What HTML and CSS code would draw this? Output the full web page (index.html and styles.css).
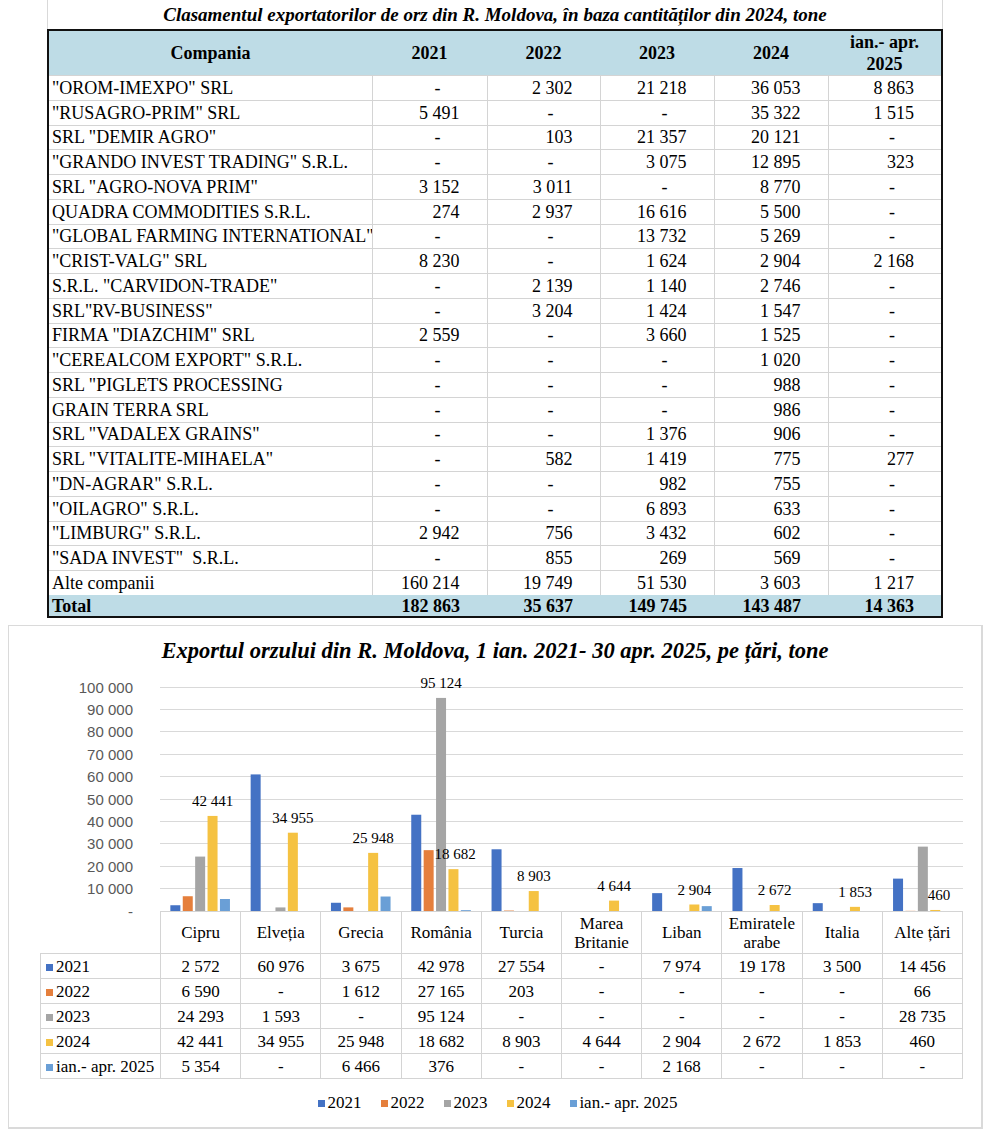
FILE: index.html
```html
<!DOCTYPE html>
<html lang="ro">
<head>
<meta charset="utf-8">
<title>Exportul orzului din R. Moldova</title>
<link rel="stylesheet" href="styles.css">
</head>
<body>
<section class="report">
  <div class="report-title">Clasamentul exportatorilor de orz din R. Moldova, în baza cantităților din 2024, tone</div>
  <div class="tbl-frame">
    <table class="rank">
      <colgroup>
        <col class="c-name"><col class="c-115"><col class="c-113"><col class="c-114"><col class="c-114"><col>
      </colgroup>
      <thead>
        <tr><th>Compania</th><th>2021</th><th>2022</th><th>2023</th><th>2024</th><th>ian.- apr.<br>2025</th></tr>
      </thead>
      <tbody>
        <tr><td class="name">"OROM-IMEXPO" SRL</td><td class="d">-</td><td>2 302</td><td>21 218</td><td>36 053</td><td>8 863</td></tr>
        <tr><td class="name">"RUSAGRO-PRIM" SRL</td><td>5 491</td><td class="d">-</td><td class="d">-</td><td>35 322</td><td>1 515</td></tr>
        <tr><td class="name">SRL "DEMIR AGRO"</td><td class="d">-</td><td>103</td><td>21 357</td><td>20 121</td><td class="d">-</td></tr>
        <tr><td class="name">"GRANDO INVEST TRADING" S.R.L.</td><td class="d">-</td><td class="d">-</td><td>3 075</td><td>12 895</td><td>323</td></tr>
        <tr><td class="name">SRL "AGRO-NOVA PRIM"</td><td>3 152</td><td>3 011</td><td class="d">-</td><td>8 770</td><td class="d">-</td></tr>
        <tr><td class="name">QUADRA COMMODITIES S.R.L.</td><td>274</td><td>2 937</td><td>16 616</td><td>5 500</td><td class="d">-</td></tr>
        <tr><td class="name">"GLOBAL FARMING INTERNATIONAL"</td><td class="d">-</td><td class="d">-</td><td>13 732</td><td>5 269</td><td class="d">-</td></tr>
        <tr><td class="name">"CRIST-VALG" SRL</td><td>8 230</td><td class="d">-</td><td>1 624</td><td>2 904</td><td>2 168</td></tr>
        <tr><td class="name">S.R.L. "CARVIDON-TRADE"</td><td class="d">-</td><td>2 139</td><td>1 140</td><td>2 746</td><td class="d">-</td></tr>
        <tr><td class="name">SRL"RV-BUSINESS"</td><td class="d">-</td><td>3 204</td><td>1 424</td><td>1 547</td><td class="d">-</td></tr>
        <tr><td class="name">FIRMA "DIAZCHIM" SRL</td><td>2 559</td><td class="d">-</td><td>3 660</td><td>1 525</td><td class="d">-</td></tr>
        <tr><td class="name">"CEREALCOM EXPORT" S.R.L.</td><td class="d">-</td><td class="d">-</td><td class="d">-</td><td>1 020</td><td class="d">-</td></tr>
        <tr><td class="name">SRL "PIGLETS PROCESSING</td><td class="d">-</td><td class="d">-</td><td class="d">-</td><td>988</td><td class="d">-</td></tr>
        <tr><td class="name">GRAIN TERRA SRL</td><td class="d">-</td><td class="d">-</td><td class="d">-</td><td>986</td><td class="d">-</td></tr>
        <tr><td class="name">SRL "VADALEX GRAINS"</td><td class="d">-</td><td class="d">-</td><td>1 376</td><td>906</td><td class="d">-</td></tr>
        <tr><td class="name">SRL "VITALITE-MIHAELA"</td><td class="d">-</td><td>582</td><td>1 419</td><td>775</td><td>277</td></tr>
        <tr><td class="name">"DN-AGRAR" S.R.L.</td><td class="d">-</td><td class="d">-</td><td>982</td><td>755</td><td class="d">-</td></tr>
        <tr><td class="name">"OILAGRO" S.R.L.</td><td class="d">-</td><td class="d">-</td><td>6 893</td><td>633</td><td class="d">-</td></tr>
        <tr><td class="name">"LIMBURG" S.R.L.</td><td>2 942</td><td>756</td><td>3 432</td><td>602</td><td class="d">-</td></tr>
        <tr><td class="name">"SADA INVEST"&nbsp; S.R.L.</td><td class="d">-</td><td>855</td><td>269</td><td>569</td><td class="d">-</td></tr>
        <tr><td class="name">Alte companii</td><td>160 214</td><td>19 749</td><td>51 530</td><td>3 603</td><td>1 217</td></tr>
      </tbody>
      <tfoot>
        <tr><td class="name">Total</td><td>182 863</td><td>35 637</td><td>149 745</td><td>143 487</td><td>14 363</td></tr>
      </tfoot>
    </table>
  </div>
</section>

<section class="chart">
  <div class="chart-title">Exportul orzului din R. Moldova, 1 ian. 2021- 30 apr. 2025, pe țări, tone</div>
  <svg class="plot" width="972" height="243" viewBox="0 0 972 243">
    <g class="grid">
      <line x1="151" x2="954" y1="220.5" y2="220.5"/>
      <line x1="151" x2="954" y1="198.5" y2="198.5"/>
      <line x1="151" x2="954" y1="175.5" y2="175.5"/>
      <line x1="151" x2="954" y1="153.5" y2="153.5"/>
      <line x1="151" x2="954" y1="131.5" y2="131.5"/>
      <line x1="151" x2="954" y1="108.5" y2="108.5"/>
      <line x1="151" x2="954" y1="86.5" y2="86.5"/>
      <line x1="151" x2="954" y1="63.5" y2="63.5"/>
      <line x1="151" x2="954" y1="41.5" y2="41.5"/>
      <line x1="151" x2="954" y1="19.5" y2="19.5"/>
    </g>
    <g class="ylab">
      <text x="124" y="249">-</text>
      <text x="124" y="226">10 000</text>
      <text x="124" y="203.5">20 000</text>
      <text x="124" y="181">30 000</text>
      <text x="124" y="159">40 000</text>
      <text x="124" y="136.5">50 000</text>
      <text x="124" y="114">60 000</text>
      <text x="124" y="91.5">70 000</text>
      <text x="124" y="69">80 000</text>
      <text x="124" y="47">90 000</text>
      <text x="124" y="24.5">100 000</text>
    </g>
    <g transform="translate(191.15 243) scale(1 -1)">
      <rect class="b1" x="-29.8" width="10" height="5.76"/>
      <rect class="b2" x="-17.4" width="10" height="14.76"/>
      <rect class="b3" x="-5" width="10" height="54.42"/>
      <rect class="b4" x="7.4" width="10" height="95.07"/>
      <rect class="b5" x="19.8" width="10" height="11.99"/>
    </g>
    <g transform="translate(271.45 243) scale(1 -1)">
      <rect class="b1" x="-29.8" width="10" height="136.59"/>
      <rect class="b3" x="-5" width="10" height="3.57"/>
      <rect class="b4" x="7.4" width="10" height="78.3"/>
    </g>
    <g transform="translate(351.75 243) scale(1 -1)">
      <rect class="b1" x="-29.8" width="10" height="8.23"/>
      <rect class="b2" x="-17.4" width="10" height="3.61"/>
      <rect class="b4" x="7.4" width="10" height="58.12"/>
      <rect class="b5" x="19.8" width="10" height="14.48"/>
    </g>
    <g transform="translate(432.05 243) scale(1 -1)">
      <rect class="b1" x="-29.8" width="10" height="96.27"/>
      <rect class="b2" x="-17.4" width="10" height="60.85"/>
      <rect class="b3" x="-5" width="10" height="213.08"/>
      <rect class="b4" x="7.4" width="10" height="41.85"/>
      <rect class="b5" x="19.8" width="10" height="0.84"/>
    </g>
    <g transform="translate(512.35 243) scale(1 -1)">
      <rect class="b1" x="-29.8" width="10" height="61.72"/>
      <rect class="b2" x="-17.4" width="10" height="0.45"/>
      <rect class="b4" x="7.4" width="10" height="19.94"/>
    </g>
    <g transform="translate(592.65 243) scale(1 -1)">
      <rect class="b4" x="7.4" width="10" height="10.4"/>
    </g>
    <g transform="translate(672.95 243) scale(1 -1)">
      <rect class="b1" x="-29.8" width="10" height="17.86"/>
      <rect class="b4" x="7.4" width="10" height="6.5"/>
      <rect class="b5" x="19.8" width="10" height="4.86"/>
    </g>
    <g transform="translate(753.25 243) scale(1 -1)">
      <rect class="b1" x="-29.8" width="10" height="42.96"/>
      <rect class="b4" x="7.4" width="10" height="5.99"/>
    </g>
    <g transform="translate(833.55 243) scale(1 -1)">
      <rect class="b1" x="-29.8" width="10" height="7.84"/>
      <rect class="b4" x="7.4" width="10" height="4.15"/>
    </g>
    <g transform="translate(913.85 243) scale(1 -1)">
      <rect class="b1" x="-29.8" width="10" height="32.38"/>
      <rect class="b2" x="-17.4" width="10" height="0.15"/>
      <rect class="b3" x="-5" width="10" height="64.37"/>
      <rect class="b4" x="7.4" width="10" height="1.03"/>
    </g>
    <g class="dlab">
      <text x="203.5" y="138">42 441</text>
      <text x="283.9" y="155">34 955</text>
      <text x="364.2" y="175">25 948</text>
      <text x="432" y="20">95 124</text>
      <text x="446" y="191">18 682</text>
      <text x="524.8" y="213">8 903</text>
      <text x="605" y="222.5">4 644</text>
      <text x="685.4" y="226.5">2 904</text>
      <text x="765.7" y="226.5">2 672</text>
      <text x="846" y="229">1 853</text>
      <text x="930" y="232">460</text>
    </g>
  </svg>
  <table class="cats">
    <colgroup><col class="c-key"><col><col><col><col><col><col><col><col><col><col></colgroup>
    <thead>
      <tr>
        <th class="corner"></th>
        <th>Cipru</th><th>Elveția</th><th>Grecia</th><th>România</th><th>Turcia</th>
        <th>Marea<br>Britanie</th><th>Liban</th><th>Emiratele<br>arabe</th><th>Italia</th><th>Alte țări</th>
      </tr>
    </thead>
    <tbody>
      <tr><td class="key"><span class="sw s1"></span>2021</td><td>2 572</td><td>60 976</td><td>3 675</td><td>42 978</td><td>27 554</td><td>-</td><td>7 974</td><td>19 178</td><td>3 500</td><td>14 456</td></tr>
      <tr><td class="key"><span class="sw s2"></span>2022</td><td>6 590</td><td>-</td><td>1 612</td><td>27 165</td><td>203</td><td>-</td><td>-</td><td>-</td><td>-</td><td>66</td></tr>
      <tr><td class="key"><span class="sw s3"></span>2023</td><td>24 293</td><td>1 593</td><td>-</td><td>95 124</td><td>-</td><td>-</td><td>-</td><td>-</td><td>-</td><td>28 735</td></tr>
      <tr><td class="key"><span class="sw s4"></span>2024</td><td>42 441</td><td>34 955</td><td>25 948</td><td>18 682</td><td>8 903</td><td>4 644</td><td>2 904</td><td>2 672</td><td>1 853</td><td>460</td></tr>
      <tr><td class="key"><span class="sw s5"></span>ian.- apr. 2025</td><td>5 354</td><td>-</td><td>6 466</td><td>376</td><td>-</td><td>-</td><td>2 168</td><td>-</td><td>-</td><td>-</td></tr>
    </tbody>
  </table>
  <div class="legend">
    <span class="item"><span class="sw s1"></span>2021</span>
    <span class="item"><span class="sw s2"></span>2022</span>
    <span class="item"><span class="sw s3"></span>2023</span>
    <span class="item"><span class="sw s4"></span>2024</span>
    <span class="item"><span class="sw s5"></span>ian.- apr. 2025</span>
  </div>
</section>
</body>
</html>
```

FILE: styles.css
```css
html, body {
  margin: 0;
  padding: 0;
  background: #ffffff;
}

body {
  font-family: "Liberation Serif", "Times New Roman", serif;
  color: #000;
}

/* ---------- ranking table ---------- */
.report {
  margin-left: 47px;
  width: 896px;
}

.report-title {
  box-sizing: border-box;
  height: 29px;
  padding-top: 4px;
  border-left: 1px solid #d9d9d9;
  border-right: 1px solid #d9d9d9;
  text-align: center;
  font-weight: bold;
  font-style: italic;
  font-size: 19px;
  line-height: 22px;
  white-space: nowrap;
}

.tbl-frame {
  border: 2px solid #111;
}

.rank {
  width: 100%;
  border-collapse: collapse;
  table-layout: fixed;
  font-size: 18px;
  line-height: 20px;
}

.rank .c-name { width: 323px; }
.rank .c-115 { width: 115px; }
.rank .c-113 { width: 113px; }
.rank .c-114 { width: 114px; }

.rank th {
  background: #bedce6;
  height: 44px;
  padding: 0;
  font-weight: bold;
  line-height: 22px;
  text-align: center;
  vertical-align: middle;
}

.rank td {
  height: 23.75px;
  padding: 0 27px 0 0;
  text-align: right;
  vertical-align: middle;
  white-space: nowrap;
}

.rank tbody td {
  border-top: 1px solid #d4d4d4;
}

.rank tbody td + td {
  border-left: 1px solid #d4d4d4;
}

.rank td.name {
  text-align: left;
  padding: 0 0 0 3px;
  overflow: hidden;
}

.rank td.d {
  padding-right: 46px;
}

.rank tfoot td {
  height: 21.5px;
  background: #bedce6;
  font-weight: bold;
}

/* ---------- chart ---------- */
.chart {
  margin: 7px 0 0 8px;
  width: 972px;
  border: 1px solid #dadada;
  border-right-width: 2px;
  border-bottom-width: 2px;
}

.chart-title {
  box-sizing: border-box;
  height: 42px;
  padding-top: 12px;
  text-align: center;
  font-weight: bold;
  font-style: italic;
  font-size: 22.5px;
  line-height: 26px;
  white-space: nowrap;
}

.plot {
  display: block;
  overflow: visible;
}

.grid line {
  stroke: #d9d9d9;
  stroke-width: 1;
}

.ylab text {
  font-family: "Liberation Sans", Arial, sans-serif;
  font-size: 15px;
  fill: #595959;
  text-anchor: end;
}

.dlab text {
  font-family: "Liberation Serif", "Times New Roman", serif;
  font-size: 15px;
  fill: #000;
  text-anchor: middle;
}

.b1 { fill: #4472c4; }
.b2 { fill: #e57f3c; }
.b3 { fill: #a5a5a5; }
.b4 { fill: #f5c242; }
.b5 { fill: #6a9fd6; }

.cats {
  margin-left: 31px;
  width: 923px;
  border-collapse: collapse;
  table-layout: fixed;
  font-size: 17px;
  line-height: 19px;
}

.cats .c-key { width: 120px; }

.cats th,
.cats td {
  border: 1px solid #d4d4d4;
  padding: 0;
  text-align: center;
  vertical-align: middle;
  font-weight: normal;
  white-space: nowrap;
}

.cats th {
  height: 41px;
}

.cats th.corner {
  border-top: none;
  border-left: none;
}

.cats td {
  height: 24px;
}

.cats td.key {
  text-align: left;
  padding-left: 5px;
}

.sw {
  display: inline-block;
  width: 7px;
  height: 7px;
  margin-right: 3px;
  vertical-align: 1px;
}

.s1 { background: #4472c4; }
.s2 { background: #e57f3c; }
.s3 { background: #a5a5a5; }
.s4 { background: #f5c242; }
.s5 { background: #6a9fd6; }

.legend {
  display: flex;
  justify-content: center;
  gap: 20px;
  margin-top: 14px;
  padding: 0 0 14px 6px;
  font-size: 17px;
  line-height: 20px;
}

.legend .sw {
  margin-right: 2px;
}
```
